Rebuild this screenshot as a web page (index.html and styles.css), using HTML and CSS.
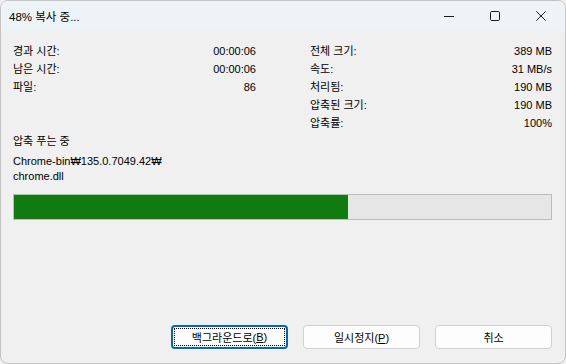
FILE: index.html
```html
<!DOCTYPE html>
<html lang="ko">
<head>
<meta charset="utf-8">
<title>48% 복사 중...</title>
<link rel="stylesheet" href="styles.css">
</head>
<body>
<div class="window">
    <div class="titlebar">
        <span class="title">48% 복사 중...</span>
        <div class="caption">
            <span class="cap-btn">
                <svg width="10" height="10" viewBox="0 0 10 10"><path d="M0 5.5h10" stroke="#1a1a1a" stroke-width="1"/></svg>
            </span>
            <span class="cap-btn">
                <svg width="10" height="10" viewBox="0 0 10 10"><rect x="0.5" y="0.5" width="9" height="9" rx="1.2" fill="none" stroke="#1a1a1a" stroke-width="1"/></svg>
            </span>
            <span class="cap-btn">
                <svg width="10" height="10" viewBox="0 0 10 10"><path d="M0.3 0.3l9.4 9.4M9.7 0.3l-9.4 9.4" stroke="#1a1a1a" stroke-width="1"/></svg>
            </span>
        </div>
    </div>

    <div class="content">
        <div class="stats">
            <div class="col">
                <div class="row"><span>경과 시간:</span><span>00:00:06</span></div>
                <div class="row"><span>남은 시간:</span><span>00:00:06</span></div>
                <div class="row"><span>파일:</span><span>86</span></div>
            </div>
            <div class="col">
                <div class="row"><span>전체 크기:</span><span>389 MB</span></div>
                <div class="row"><span>속도:</span><span>31 MB/s</span></div>
                <div class="row"><span>처리됨:</span><span>190 MB</span></div>
                <div class="row"><span>압축된 크기:</span><span>190 MB</span></div>
                <div class="row"><span>압축률:</span><span>100%</span></div>
            </div>
        </div>

        <div class="status">압축 푸는 중</div>
        <div class="path">Chrome-bin₩135.0.7049.42₩<br>chrome.dll</div>

        <div class="progress">
            <div class="progress-fill" style="width: 334px"></div>
        </div>

        <div class="buttons">
            <button class="btn default"><span class="focus">백그라운드로(<u>B</u>)</span></button>
            <button class="btn"><span>일시정지(<u>P</u>)</span></button>
            <button class="btn"><span>취소</span></button>
        </div>
    </div>
</div>
</body>
</html>
```

FILE: styles.css
```css
html, body {
    margin: 0;
    padding: 0;
    height: 100%;
    overflow: hidden;
    background: #f0f0f0;
}

body {
    font-family: "Liberation Sans", "Noto Sans CJK KR", sans-serif;
    font-size: 11px;
    color: #000;
}

.window {
    box-sizing: border-box;
    height: 364px;
    width: 566px;
    border: 1px solid #c4c4c4;
    border-radius: 8px;
    overflow: hidden;
    display: flex;
    flex-direction: column;
    background: #f0f0f0;
}

.titlebar {
    height: 30px;
    flex: none;
    display: flex;
    align-items: center;
    justify-content: space-between;
    background: #edf3f7;
}

.title {
    padding-left: 8px;
    padding-bottom: 1px;
    font-size: 11.5px;
}

.caption {
    display: flex;
    height: 100%;
    padding-right: 1px;
}

.cap-btn {
    width: 46px;
    display: flex;
    align-items: center;
    justify-content: center;
}

.cap-btn svg {
    display: block;
}

.content {
    flex: 1;
    display: flex;
    flex-direction: column;
    padding: 11px 13px 14px 12px;
}

.stats {
    display: grid;
    grid-template-columns: 243px 242px;
    column-gap: 54px;
}

.row {
    display: flex;
    justify-content: space-between;
    height: 18px;
    line-height: 18px;
}

.status {
    height: 18px;
    line-height: 18px;
}

.path {
    margin-top: 4px;
    line-height: 14.5px;
}

.progress {
    margin-top: 11px;
    height: 24px;
    border: 1px solid #bcbcbc;
    background: #e6e6e6;
}

.progress-fill {
    height: 100%;
    background: #107c10;
}

.buttons {
    margin-top: auto;
    display: flex;
    justify-content: flex-end;
    gap: 15px;
}

.btn {
    box-sizing: border-box;
    width: 117px;
    height: 24px;
    padding: 0;
    background: #fdfdfd;
    border: 1px solid #d0d0d0;
    border-radius: 4px;
    font: inherit;
    color: #000;
    display: flex;
    align-items: center;
    justify-content: center;
}

.btn.default {
    border: 2px solid #0067c0;
    padding: 1px;
}

.btn.default .focus {
    flex: 1;
    align-self: stretch;
    border: 1px dotted #000;
    display: flex;
    align-items: center;
    justify-content: center;
}
```
